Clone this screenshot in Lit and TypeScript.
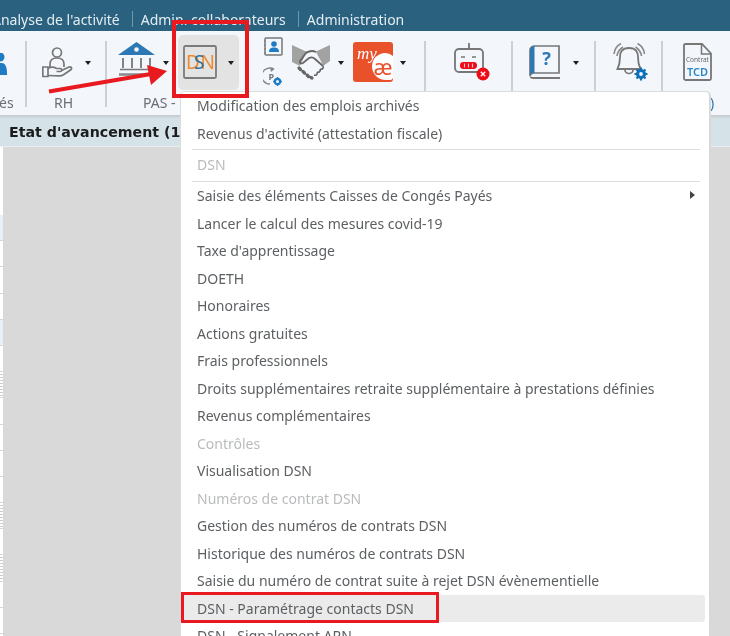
import { LitElement, html, css, svg } from "lit";
import { customElement } from "lit/decorators.js";

const caret = html`<span class="caret"></span>`;

const person = svg`<svg class="i-person" viewBox="0 0 31 31" fill="none" stroke="#777" stroke-width="1.700">
  <circle cx="15" cy="5.500" r="4.500"/>
  <path d="M8 20v-3c0-4 3-6 7-6s7 2 7 6v3"/>
  <path d="M.8 20h5.200v9.500H.8z"/>
  <path d="M6 21.500c3-2 6-1.500 8.500 0h4c1.500 0 1.500 3 0 3h-4"/>
  <path d="M19.500 23.500l7.500-3.500c2-.8 3.500 1.200 1.800 2.800l-7.300 5c-1.500 1-3 1.200-5 1L6 28.500"/>
</svg>`;

const bank = svg`<svg class="i-bank" viewBox="0 0 37 34">
  <path d="M0 13L18.500 0 37 13z" fill="#2b78b5"/>
  <circle cx="18.500" cy="7.500" r="2.300" fill="#f3f6fb"/>
  <path d="M5 16v10M14 16v10M23 16v10M32 16v10" stroke="#777" stroke-width="1.800"/>
  <path d="M2 27.500h33" stroke="#777" stroke-width="1.500"/>
  <path d="M1 32.500h35" stroke="#888" stroke-width="2.600"/>
</svg>`;

const dsn = svg`<svg class="i-dsn" viewBox="0 0 34 34">
  <rect x="1" y="1" width="32" height="32" rx="1.500" fill="none" stroke="#7b7b7b" stroke-width="1.800"/>
  <text x="3" y="24" class="d">D</text>
  <text x="17.500" y="24" class="d">N</text>
  <text x="11" y="24" class="s">S</text>
</svg>`;

const card = svg`<svg class="i-card" viewBox="0 0 20 19">
  <rect x="2" y="1" width="17" height="17" rx="1" fill="#f3f6fb" stroke="#777" stroke-width="1.500"/>
  <path d="M1 4h2M1 8h2M1 12h2M1 16h2" stroke="#777" stroke-width="1.200"/>
  <circle cx="11" cy="7" r="2.800" fill="#1f7cc4"/>
  <path d="M6 15c0-3.500 2-4.500 5-4.500s5 1 5 4.500z" fill="#1f7cc4"/>
</svg>`;

const pgear = svg`<svg class="i-pgear" viewBox="0 0 19 19">
  <path d="M11 2.200A8 8 0 1 0 7 17" fill="none" stroke="#888" stroke-width="1.400"/>
  <path d="M7 .5L11.500 2 8 5z" fill="#888"/>
  <text x="5.500" y="13" class="p">P</text>
  <circle cx="14.500" cy="14.500" r="2.600" fill="none" stroke="#1f7cc4" stroke-width="2.200"/>
  <path d="M14.500 10v1.500M14.500 17.500V19M10 14.500h1.500M17.500 14.500H19" stroke="#1f7cc4" stroke-width="1.500"/>
</svg>`;

const shake = svg`<svg class="i-shake" viewBox="0 0 38 37">
  <path d="M0 1l13 6 9 1-14 14-8-4zM38 1L25 7l-4 1 10 14 7-5z" fill="#a2a2a2"/>
  <path d="M14 9c3-2 7-2.500 10-1l7 13-3 6-9 8-11-13z" fill="#f3f6fb"/>
  <path d="M24 8c-4-2-7-1-10 1l-6 8c-1 2 1 3 3 2l6-5c2-1 4-1 6 1l8 7" fill="none" stroke="#666" stroke-width="1.800"/>
  <path d="M31 22c1 2-1 4-3 3M28 25c1 2-1 4-3 3M25 28c1 2-1 4-3 3" fill="none" stroke="#666" stroke-width="1.600"/>
  <path d="M7 24l1.500 1.500M11 27.500l1.500 1.500M15 31l1.500 1.500M19 33.500l1 .5" stroke="#666" stroke-width="3.200" stroke-linecap="round"/>
</svg>`;

const myae = svg`<svg class="i-myae" viewBox="0 0 40 40">
  <rect width="40" height="40" rx="3" fill="#e9512b"/>
  <path d="M40 14a13 13 0 0 0-21 10c0 8 6 14 14 14h4a3 3 0 0 0 3-3z" fill="#fff"/>
  <text x="4" y="17" class="my">my</text>
  <text x="20.500" y="33" class="ae">æ</text>
</svg>`;

const robot = svg`<svg class="i-robot" viewBox="0 0 36 38">
  <path d="M15 0v6" stroke="#777" stroke-width="1.800"/>
  <rect x="1" y="6" width="28" height="23" rx="4" fill="none" stroke="#777" stroke-width="1.800"/>
  <path d="M7 14h4M18 14h4" stroke="#777" stroke-width="1.500"/>
  <rect x="6" y="19" width="17" height="7" rx="3.400" fill="#ef0b16"/>
  <path d="M10.500 20.500v4M14.500 20.500v4M18.500 20.500v4" stroke="#f6c4c6" stroke-width="1.200"/>
  <circle cx="29" cy="31" r="6.500" fill="#ef0b16"/>
  <path d="M26.800 28.800l4.400 4.400M31.200 28.800l-4.400 4.400" stroke="#fff" stroke-width="1.300"/>
</svg>`;

const book = svg`<svg class="i-book" viewBox="0 0 32 34">
  <path d="M5 1h25v27H5.500C3 28 1 29 1 31V5c0-2 2-4 4-4z" fill="#f3f6fb" stroke="#777" stroke-width="1.700"/>
  <path d="M1 5c0-2 2-4 4.500-4v27c-2 0-3.500.5-4.500 2z" fill="#2b78b5"/>
  <path d="M1.500 31.500c0 1 1.500 1.500 3 1.500H31" fill="none" stroke="#777" stroke-width="1.800"/>
  <text x="17.500" y="20" class="q">?</text>
</svg>`;

const bell = svg`<svg class="i-bell" viewBox="0 0 35 38">
  <path d="M16 5c-7 0-9 4-9 9 0 5-.5 8-2.500 12h23c-2-4-2.500-7-2.500-12 0-5-2-9-9-9z" fill="none" stroke="#777" stroke-width="1.800"/>
  <path d="M12 27a4 3.500 0 0 0 8 0" fill="none" stroke="#777" stroke-width="1.700"/>
  <path d="M1 11C1.500 6 4 2.500 8 .5M4 13C4.500 9 6 6.500 10 4M31.500 11C31 6 28.500 2.500 24.500.5M28.500 13C28 9 26.500 6.500 22.500 4" fill="none" stroke="#888" stroke-width="1.600"/>
  <circle cx="28" cy="31" r="3.500" fill="none" stroke="#0f6fb8" stroke-width="3.200"/>
  <path d="M28 24.500v3M28 34.500v3M21.500 31h3M31.500 31h3M23.500 26.500l2 2M30.500 33.500l2 2M32.500 26.500l-2 2M25.500 33.500l-2 2" stroke="#0f6fb8" stroke-width="2.200"/>
</svg>`;

const tcd = svg`<svg class="i-tcd" viewBox="0 0 29 38">
  <path d="M2.500 1H19l9 9.500v25c0 1-.8 1.500-1.500 1.500h-24C1.500 37 1 36.200 1 35.500v-33C1 1.500 1.500 1 2.500 1z" fill="#f3f6fb" stroke="#777" stroke-width="1.800"/>
  <path d="M18.500 1.500V11H28" fill="none" stroke="#777" stroke-width="1.500"/>
  <text x="14.500" y="19" class="ct">Contrat</text>
  <text x="14.500" y="33" class="tc">TCD</text>
</svg>`;

const sliver = svg`<svg class="i-sliver" viewBox="0 0 8 22">
  <circle cx="0" cy="4" r="4.500" fill="#1f7cc4"/>
  <path d="M-4 10h6c3 0 5 4 5 10v2H-4z" fill="#1f7cc4"/>
</svg>`;

const menuTop = ["Modification des emplois archivés", "Revenus d'activité (attestation fiscale)"];

type Row = { t: string; off?: boolean; sub?: boolean; hot?: boolean };
const menuRest: Row[] = [
  { t: "Saisie des éléments Caisses de Congés Payés", sub: true },
  { t: "Lancer le calcul des mesures covid-19" },
  { t: "Taxe d'apprentissage" },
  { t: "DOETH" },
  { t: "Honoraires" },
  { t: "Actions gratuites" },
  { t: "Frais professionnels" },
  { t: "Droits supplémentaires retraite supplémentaire à prestations définies" },
  { t: "Revenus complémentaires" },
  { t: "Contrôles", off: true },
  { t: "Visualisation DSN" },
  { t: "Numéros de contrat DSN", off: true },
  { t: "Gestion des numéros de contrats DSN" },
  { t: "Historique des numéros de contrats DSN" },
  { t: "Saisie du numéro de contrat suite à rejet DSN évènementielle" },
  { t: "DSN - Paramétrage contacts DSN", hot: true },
  { t: "DSN - Signalement ARN" },
];

const stripRows = [1, 0, 0, 0, 1, 0, 2, 0, 0, 0, 0, 2, 0, 2, 0, 0, 0];

@customElement("app-root")
export class AppRoot extends LitElement {
  static styles = css`
    :host {
      display: block;
      position: relative;
      width: 730px;
      height: 636px;
      overflow: hidden;
      background: #d9d9d9;
      font-family: "Noto Sans", sans-serif;
      filter: blur(0.35px);
    }
    .nav {
      height: 31px;
      background: #2a617f;
      display: flex;
      align-items: center;
      padding-top: 7px;
      box-sizing: border-box;
      color: #e4edf2;
      font-size: 14px;
      overflow: hidden;
      white-space: nowrap;
    }
    .nav span { flex: none; }
    .nav .first { margin-left: -8px; }
    .nav .bar {
      width: 1px;
      height: 16px;
      background: #6f98ad;
      margin: 0 8px 0 12px;
    }

    .tools {
      height: 84px;
      background: #f3f6fb;
      display: flex;
      border-bottom: 1px solid #c9cccf;
      box-sizing: content-box;
    }
    .sep {
      flex: none;
      width: 2px;
      height: 66px;
      margin-top: 10px;
      background: #ccd0d4;
    }
    .group { flex: none; display: flex; flex-direction: column; }
    .icons { height: 62px; display: flex; align-items: center; }
    .label { font-size: 14px; line-height: 18px; padding-top: 1px; color: #6b6f73; white-space: nowrap; }
    .g0 { width: 25px; overflow: hidden; }
    .g0 .label { margin-left: -1px; }
    .g1 { width: 78px; }
    .g1 .icons { padding-left: 15px; }
    .g1 .label { padding-left: 27px; }
    .g2 { width: 317px; }
    .g2 .icons { padding-left: 11px; }
    .g2 .label { padding-left: 36px; }
    .g3 { width: 85px; }
    .g3 .icons { padding-left: 28px; }
    .g4 { width: 81px; }
    .g4 .icons { padding-left: 16px; }
    .g5 { width: 65px; }
    .g5 .icons { padding-left: 17px; }
    .g6 { width: 66px; }
    .g6 .icons { padding-left: 20px; }
    .g6 .label { padding-left: 47px; color: #2b78b5; }

    svg { flex: none; display: block; }
    .i-sliver { width: 8px; height: 22px; margin-top: 4px; }
    .i-person { width: 31px; height: 31px; }
    .i-bank { width: 37px; height: 34px; margin-top: -6px; }
    .i-dsn { width: 34px; height: 34px; margin-top: -1px; }
    .i-card { width: 20px; height: 19px; }
    .i-pgear { width: 19px; height: 19px; }
    .i-shake { width: 38px; height: 37px; }
    .i-myae { width: 40px; height: 40px; }
    .i-robot { width: 36px; height: 38px; }
    .i-book { width: 32px; height: 34px; }
    .i-bell { width: 35px; height: 38px; }
    .i-tcd { width: 29px; height: 38px; }

    .caret {
      flex: none;
      width: 0;
      height: 0;
      border-left: 3.500px solid transparent;
      border-right: 3.500px solid transparent;
      border-top: 4px solid #1f1f1f;
      margin-top: 2px;
    }
    .c12 { margin-left: 12px; }
    .c8 { margin-left: 8px; }
    .c7 { margin-left: 7px; }
    .c9 { flex: none; margin-left: 9px; }

    .dsn-btn {
      flex: none;
      width: 61px;
      height: 55px;
      margin-left: 9px;
      box-sizing: border-box;
      padding-left: 5px;
      background: #e3e3e3;
      border-radius: 5px;
      display: flex;
      align-items: center;
    }
    .dsn-btn .caret { margin-left: 11px; }
    .stack {
      flex: none;
      margin-left: 24px;
      display: flex;
      flex-direction: column;
      gap: 11px;
      margin-top: -1px;
    }

    text { font-family: "Noto Sans", sans-serif; }
    .d { font-size: 19px; fill: #ee8a2d; }
    .s { font-size: 19px; fill: #2b6f9f; }
    .p { font-size: 9px; fill: #777; font-weight: 700; }
    .my { font-family: "Liberation Serif", serif; font-style: italic; font-size: 17px; fill: #fff; }
    .ae { font-size: 22px; fill: #e9512b; }
    .q { font-size: 18px; font-weight: 700; fill: #2b78b5; text-anchor: middle; }
    .ct { font-size: 6.500px; fill: #666; text-anchor: middle; }
    .tc { font-size: 11px; font-weight: 600; fill: #2b88c8; text-anchor: middle; }

    .tabbar {
      height: 31px;
      background: linear-gradient(#c9cfd3 0, #d5e2e8 3px);
      box-sizing: border-box;
      padding: 6px 0 0 9px;
      font-family: "DejaVu Sans", sans-serif;
      font-weight: 700;
      font-size: 14.200px;
      line-height: 20px;
      color: #1c1c1c;
      white-space: nowrap;
      overflow: hidden;
      border-bottom: 1px solid #e8eef1;
    }
    .strip {
      width: 3px;
      height: 489px;
      overflow: hidden;
      background: #fff;
      padding-top: 68px;
      box-sizing: border-box;
    }
    .strip div { height: 26.200px; box-sizing: border-box; border-bottom: 1px solid #d4d8da; background: #fff; }
    .strip .blue { background: #e8f0f5; }
    .strip .dots { background: repeating-linear-gradient(#fff 0 2px, #ccc 2px 3px); }

    .menu {
      position: absolute;
      left: 180px;
      top: 91px;
      width: 531px;
      background: #fff;
      border: 1px solid #dcdcdc;
      border-right: 2px solid #d8d8d8;
      border-radius: 5px 5px 0 0;
      box-sizing: border-box;
      padding-right: 4px;
      color: #5d6063;
      font-size: 14px;
    }
    .item {
      height: 27.500px;
      line-height: 27.500px;
      padding-left: 14px;
      white-space: nowrap;
      position: relative;
      border-radius: 3px;
      margin-left: 2px;
    }
    .item.off, .item.head { color: #b9bbbd; }
    .item.hot { background: #ebebeb; }
    .item.sub::after {
      content: "";
      position: absolute;
      right: 10px;
      top: 9px;
      border-top: 4px solid transparent;
      border-bottom: 4px solid transparent;
      border-left: 5px solid #444;
    }
    .rule { height: 1px; background: #dedede; margin: 1.500px 5px 0 11px; }
    .rule.r2 { margin: 1.500px 5px 0.300px 11px; }
    .item.head { height: 30px; line-height: 30px; }

    .mark {
      position: absolute;
      box-sizing: border-box;
      border: 4px solid #e81a20;
      pointer-events: none;
    }
    .m1 { left: 172px; top: 20px; width: 77px; height: 78px; }
    .m2 { left: 181px; top: 592px; width: 258px; height: 31px; border-width: 3.500px; }
    .arrow { position: absolute; left: 45px; top: 62px; width: 126px; height: 34px; }
  `;

  render() {
    return html`
      <div class="nav">
        <span class="first">Analyse de l'activité</span>
        <span class="bar"></span>
        <span>Admin. collaborateurs</span>
        <span class="bar"></span>
        <span>Administration</span>
      </div>
      <div class="tools">
        <div class="group g0"><div class="icons">${sliver}</div><div class="label">és</div></div>
        <div class="sep"></div>
        <div class="group g1">
          <div class="icons">${person}<span class="caret c12"></span></div>
          <div class="label">RH</div>
        </div>
        <div class="sep"></div>
        <div class="group g2">
          <div class="icons">
            ${bank}<span class="caret c8"></span>
            <div class="dsn-btn">${dsn}${caret}</div>
            <div class="stack">${card}${pgear}</div>
            <span class="c9"></span>${shake}<span class="caret c8"></span>
            <span class="c9"></span>${myae}<span class="caret c7"></span>
          </div>
          <div class="label">PAS - DSN</div>
        </div>
        <div class="sep"></div>
        <div class="group g3"><div class="icons">${robot}</div></div>
        <div class="sep"></div>
        <div class="group g4"><div class="icons">${book}<span class="caret c12"></span></div></div>
        <div class="sep"></div>
        <div class="group g5"><div class="icons">${bell}</div></div>
        <div class="sep"></div>
        <div class="group g6"><div class="icons">${tcd}</div><div class="label">)</div></div>
      </div>
      <div class="tabbar">Etat d'avancement (1)</div>
      <div class="strip">
        ${stripRows.map((k) => html`<div class=${k === 1 ? "blue" : k === 2 ? "dots" : ""}></div>`)}
      </div>

      <div class="menu">
        ${menuTop.map((t) => html`<div class="item">${t}</div>`)}
        <div class="rule"></div>
        <div class="item head">DSN</div>
        <div class="rule r2"></div>
        ${menuRest.map(
          (r) => html`<div class="item ${r.off ? "off" : ""} ${r.sub ? "sub" : ""} ${r.hot ? "hot" : ""}">${r.t}</div>`
        )}
      </div>

      <div class="mark m1"></div>
      <div class="mark m2"></div>
      <svg class="arrow" viewBox="0 0 126 34">
        <path d="M4 29.500L106 12" stroke="#e81a20" stroke-width="4" fill="none"/>
        <path d="M122 9L102 3l4 20z" fill="#e81a20"/>
      </svg>
    `;
  }
}
